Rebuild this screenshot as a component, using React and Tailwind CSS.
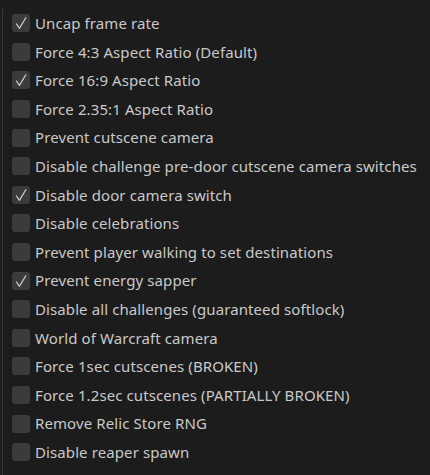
import React, { useState } from "react";

const options = [
    { label: "Uncap frame rate", checked: true },
    { label: "Force 4:3 Aspect Ratio (Default)", checked: false },
    { label: "Force 16:9 Aspect Ratio", checked: true },
    { label: "Force 2.35:1 Aspect Ratio", checked: false },
    { label: "Prevent cutscene camera", checked: false },
    { label: "Disable challenge pre-door cutscene camera switches", checked: false },
    { label: "Disable door camera switch", checked: true },
    { label: "Disable celebrations", checked: false },
    { label: "Prevent player walking to set destinations", checked: false },
    { label: "Prevent energy sapper", checked: true },
    { label: "Disable all challenges (guaranteed softlock)", checked: false },
    { label: "World of Warcraft camera", checked: false },
    { label: "Force 1sec cutscenes (BROKEN)", checked: false },
    { label: "Force 1.2sec cutscenes (PARTIALLY BROKEN)", checked: false },
    { label: "Remove Relic Store RNG", checked: false },
    { label: "Disable reaper spawn", checked: false },
];

function CheckRow({ label, checked, onToggle }) {
    return (
        <label className="flex items-center h-[28.6px] cursor-pointer select-none" onClick={onToggle}>
            <span className="w-[18px] h-[18px] rounded-[3px] bg-[#3b3b3b] flex items-center justify-center shrink-0">
                {checked && (
                    <svg width="14" height="14" viewBox="0 0 14 14" fill="none">
                        <path d="M2.5 8 L5.5 12.3 L11.8 1.8" stroke="#d4d4d4" strokeWidth="1.2" strokeLinecap="round" strokeLinejoin="round" />
                    </svg>
                )}
            </span>
            <span className="ml-[5px] text-[15px] text-[#c9c9c9] whitespace-nowrap tracking-[0.1px]">{label}</span>
        </label>
    );
}

export default function App() {
    const [items, setItems] = useState(options);

    function toggle(i) {
        setItems((prev) => prev.map((it, idx) => (idx === i ? { ...it, checked: !it.checked } : it)));
    }

    return (
        <div className="w-[430px] h-[475px] bg-[#1c1c1c] pt-[9px] pl-[2px] overflow-hidden flex flex-col" style={{ fontFamily: '"Noto Sans", sans-serif' }}>
            <div className="flex-1 border-l border-[#3a3a3a] pl-[9px]">
                {items.map((it, i) => (
                    <CheckRow key={i} label={it.label} checked={it.checked} onToggle={() => toggle(i)} />
                ))}
            </div>
        </div>
    );
}
